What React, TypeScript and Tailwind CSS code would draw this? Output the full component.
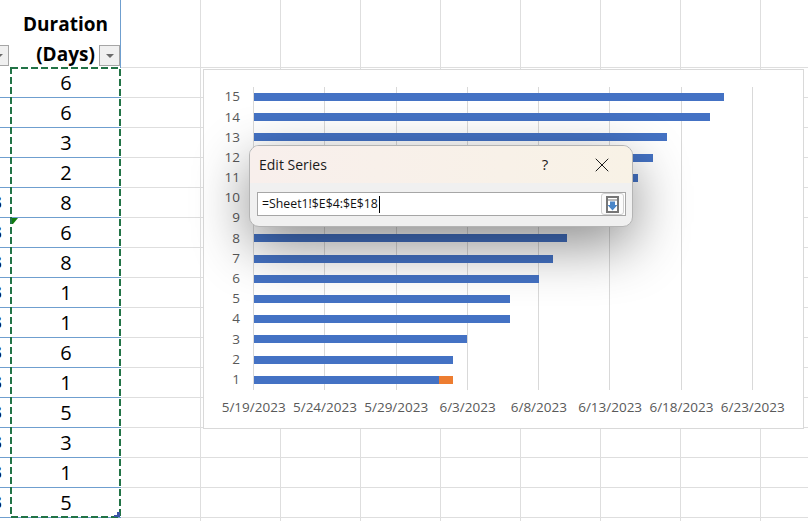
import { X } from "lucide-react";

const durations = [6, 6, 3, 2, 8, 6, 8, 1, 1, 6, 1, 5, 3, 1, 5];
const clippedFrom = 4;
const barEnds = [439, 453, 467, 510, 510, 539, 553, 567, 596, 624, 638, 653, 667, 710, 724];
const dates = ["5/19/2023", "5/24/2023", "5/29/2023", "6/3/2023", "6/8/2023", "6/13/2023", "6/18/2023", "6/23/2023"];
const chartLines = [0, 1, 2, 3, 4, 5, 6, 7];
const emptyCols = [0, 1, 2, 3, 4, 5, 6, 7, 8];

function GridCols({ bottom }: { bottom: boolean }) {
  return (
    <>
      {emptyCols.map((c) => (
        <div key={c} className={`w-[80px] shrink-0 border-r border-[#dedede] ${bottom ? "border-b" : ""}`} />
      ))}
    </>
  );
}

function FilterCaret() {
  return <div className="w-0 h-0 border-x-[4px] border-x-transparent border-t-[4px] border-t-[#6b6b6b]" />;
}

function Chart() {
  return (
    <div className="absolute left-[203px] top-[69px] w-[601px] h-[360px] bg-white border border-[#d9d9d9] pt-[17px] font-['Open_Sans',sans-serif] text-[13.5px] text-[#595959]">
      <div className="flex">
        <div className="w-[36px] shrink-0 flex flex-col">
          {[15, 14, 13, 12, 11, 10, 9, 8, 7, 6, 5, 4, 3, 2, 1].map((n) => (
            <div key={n} className="h-[20.2px] flex items-center justify-end leading-none">{n}</div>
          ))}
        </div>
        <div className="relative ml-[13px] w-[500px] flex flex-col">
          <div className="absolute inset-0 flex">
            {chartLines.map((c) => (
              <div key={c} className={`${c === 7 ? "w-px" : "w-[71.3px]"} shrink-0 border-l border-[#d9d9d9]`} />
            ))}
          </div>
          {barEnds.slice().reverse().map((end, i) => (
            <div key={i} className="relative h-[20.2px] flex items-center pl-px">
              <div className="h-[8px] bg-[#4472c4]" style={{ width: end - 254 }} />
              {i === 14 && <div className="h-[8px] w-[14px] bg-[#ed7d31]" />}
            </div>
          ))}
        </div>
      </div>
      <div className="flex ml-[14px] mt-[8px]">
        {dates.map((d) => (
          <div key={d} className="w-[71.3px] shrink-0 flex justify-center whitespace-nowrap leading-[18px]">{d}</div>
        ))}
      </div>
    </div>
  );
}

function Dialog() {
  return (
    <div className="absolute left-[249px] top-[145px] w-[384px] h-[82px] rounded-[10px] border border-[#b4b4b4] bg-[#f0f0f0] overflow-hidden shadow-[0_18px_55px_rgba(0,0,0,0.45)] font-['Open_Sans',sans-serif] text-black">
      <div className="h-[37px] flex items-center pl-[9px] pr-[18px] bg-gradient-to-r from-[#f8efec] to-[#f8f2e6]">
        <div className="flex-1 text-[14px] text-[#1a1a1a]">Edit Series</div>
        <div className="w-[20px] text-center text-[15px] text-[#1a1a1a] mr-[35px]">?</div>
        <X size={24} strokeWidth={1} color="#1a1a1a" />
      </div>
      <div className="pt-[9px] pl-[7px] pr-[6px]">
        <div className="h-[24px] bg-white border border-[#a6a6a6] flex items-center justify-between pl-[4px] pr-[1px]">
          <div className="flex items-center text-[12.3px] leading-none text-[#111]">
            <span className="pt-px">=Sheet1!$E$4:$E$18</span>
            <span className="w-px h-[17px] bg-black ml-px" />
          </div>
          <div className="w-[23px] h-[22px] rounded-[3px] border border-[#d0d0d0] bg-[#fbfbfb] flex items-center justify-center">
            <svg width="13" height="17" viewBox="0 0 13 17">
              <rect x="1" y="1" width="11" height="15" fill="#fff" stroke="#767676" strokeWidth="2" />
              <rect x="1" y="3.5" width="11" height="1" fill="#767676" />
              <path d="M4 5.5h5v3.5h2.5L6.5 14.5 1.5 9H4z" fill="#4a86c8" />
            </svg>
          </div>
        </div>
      </div>
    </div>
  );
}

export default function App() {
  return (
    <div className="relative w-[808px] h-[521px] overflow-hidden bg-white font-['Open_Sans',sans-serif] text-black">
      <div className="flex h-[68px]">
        <div className="w-[11px] shrink-0 relative">
          <div className="absolute right-[2px] top-[45px] w-[20px] h-[21px] bg-[#f0f0f0] border border-[#a6a6a6] flex items-center justify-center">
            <FilterCaret />
          </div>
        </div>
        <div className="relative w-[110px] shrink-0 border-r border-[#6f9fcf] text-center font-bold text-[19px] leading-[30px] pt-[9px]">
          <div>Duration</div>
          <div>(Days)</div>
          <div className="absolute right-0 top-[45px] w-[21px] h-[21px] bg-[#f0f0f0] border border-[#a6a6a6] flex items-center justify-center">
            <FilterCaret />
          </div>
        </div>
        <div className="flex border-b border-[#dedede]">
          <GridCols bottom={false} />
        </div>
      </div>
      {durations.map((d, i) => (
        <div key={i} className="flex h-[30px]">
          <div className="w-[11px] shrink-0 border-b border-[#6f9fcf] overflow-hidden flex items-center justify-end pr-[9px] text-[19px]">
            {i >= clippedFrom && <span>3</span>}
          </div>
          <div className="w-[110px] shrink-0 border-b border-[#6f9fcf] flex items-center justify-center text-[20px] leading-none">
            {d}
          </div>
          <GridCols bottom />
        </div>
      ))}
      <div className="flex h-[4px]">
        <div className="w-[121px] shrink-0" />
        <GridCols bottom={false} />
      </div>

      <svg className="absolute left-0 top-0" width="130" height="521">
        <rect x="11" y="68" width="109" height="449" fill="none" stroke="#217346" strokeWidth="2" strokeDasharray="7 3" />
        <path d="M12 218h6l-5 6h-1z" fill="#107c10" />
        <path d="M114 517v-2h3v-3h3v5z" fill="#3b55a5" />
      </svg>

      <Chart />
      <Dialog />
    </div>
  );
}
